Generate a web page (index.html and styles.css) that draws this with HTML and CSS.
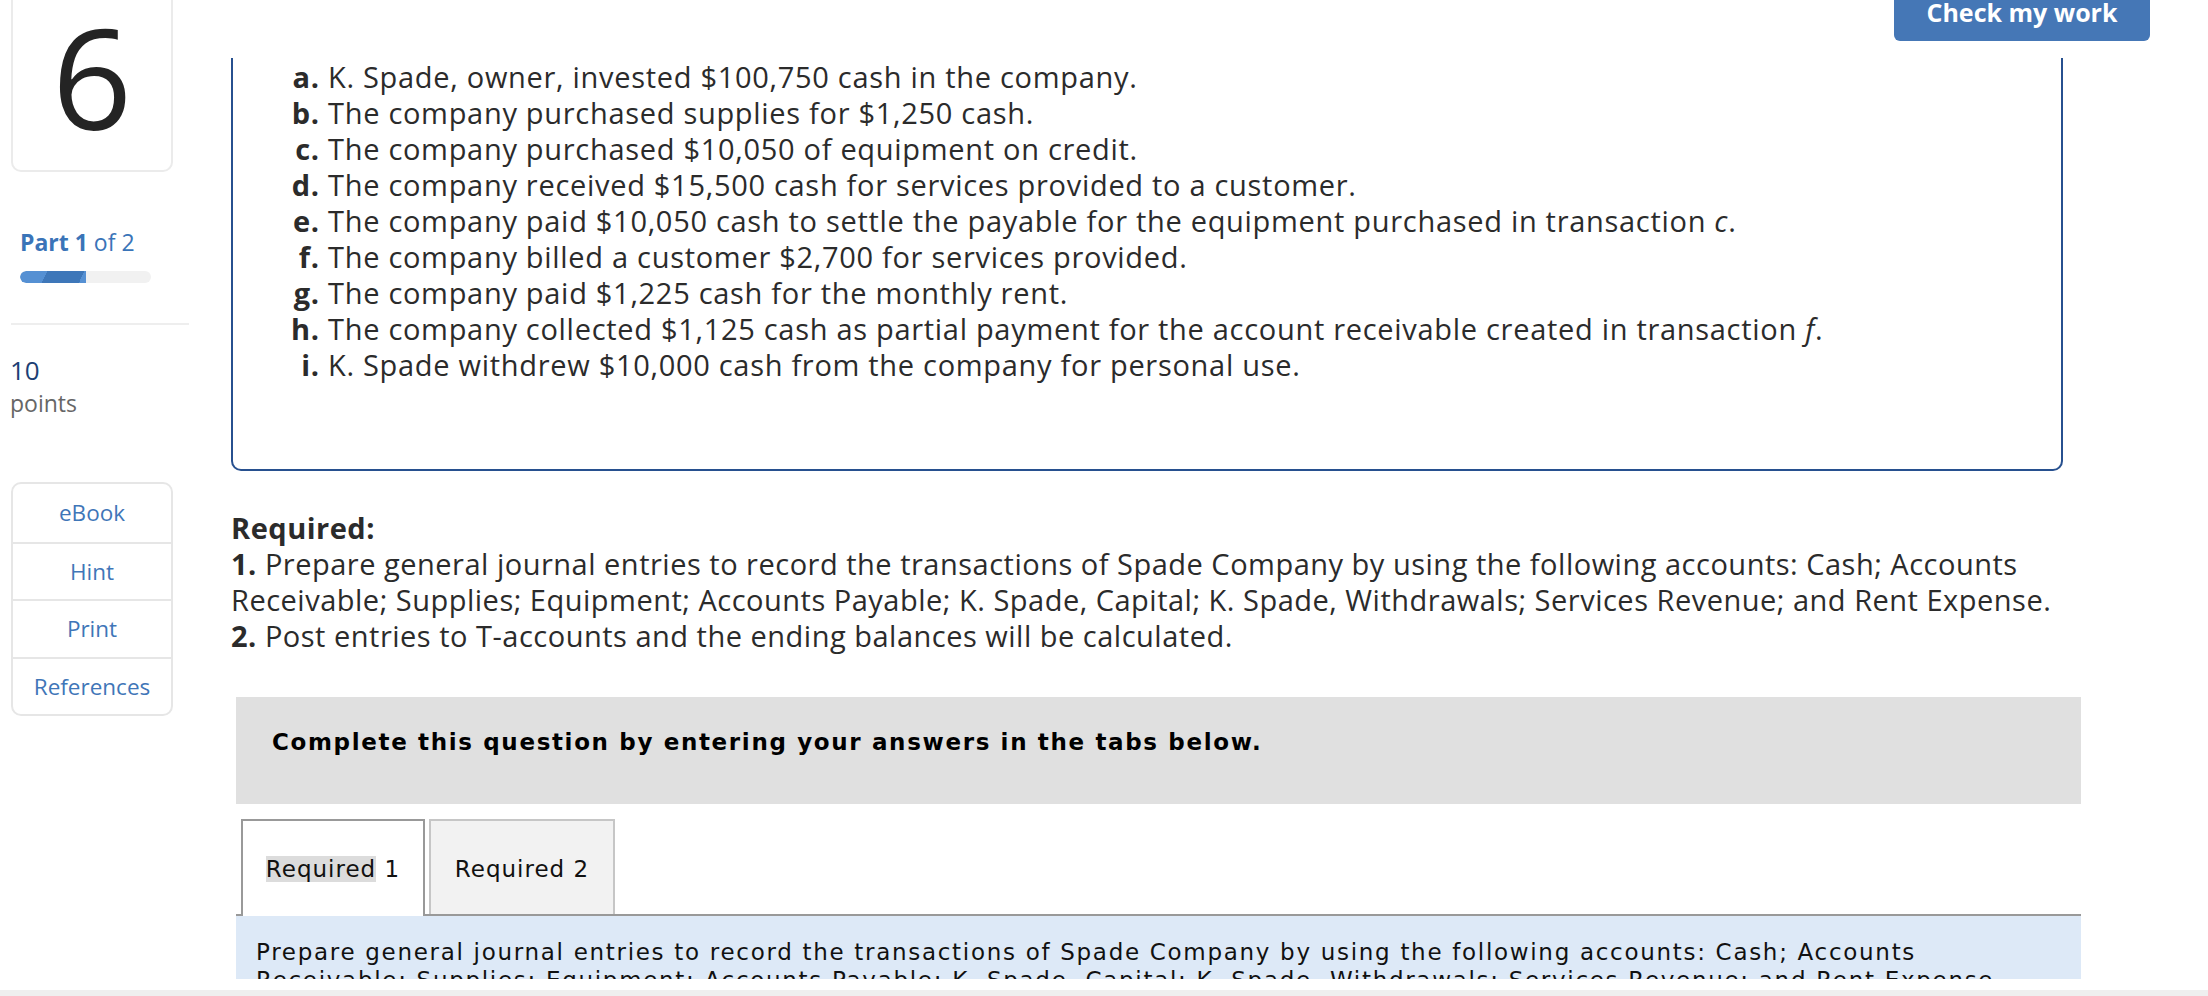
FILE: index.html
```html
<!DOCTYPE html>
<html lang="en">
<head>
<meta charset="utf-8">
<title>Question 6</title>
<link rel="stylesheet" href="styles.css">
</head>
<body>
<div class="page">
  <div class="viewport">
    <aside class="sidebar">
      <div class="qcard"><span class="qnum">6</span></div>
      <div class="part"><b>Part 1</b> of 2</div>
      <div class="progress"><div class="progress-fill"></div></div>
      <div class="divider"></div>
      <div class="pts-num">10</div>
      <div class="pts-label">points</div>
      <ul class="tools">
        <li>eBook</li>
        <li>Hint</li>
        <li>Print</li>
        <li>References</li>
      </ul>
    </aside>
    <main class="main">
      <div class="topbar"><a class="check" href="#">Check my work</a></div>
      <div class="txbox">
        <ol class="tx">
          <li>K. Spade, owner, invested $100,750 cash in the company.</li>
          <li>The company purchased supplies for $1,250 cash.</li>
          <li>The company purchased $10,050 of equipment on credit.</li>
          <li>The company received $15,500 cash for services provided to a customer.</li>
          <li>The company paid $10,050 cash to settle the payable for the equipment purchased in transaction <i>c</i>.</li>
          <li>The company billed a customer $2,700 for services provided.</li>
          <li>The company paid $1,225 cash for the monthly rent.</li>
          <li>The company collected $1,125 cash as partial payment for the account receivable created in transaction <i>f</i>.</li>
          <li>K. Spade withdrew $10,000 cash from the company for personal use.</li>
        </ol>
      </div>
      <div class="required">
        <div><b>Required:</b></div>
        <div><b>1.</b> Prepare general journal entries to record the transactions of Spade Company by using the following accounts: Cash; Accounts<br>Receivable; Supplies; Equipment; Accounts Payable; K. Spade, Capital; K. Spade, Withdrawals; Services Revenue; and Rent Expense.</div>
        <div><b>2.</b> Post entries to T-accounts and the ending balances will be calculated.</div>
      </div>
      <div class="banner">Complete this question by entering your answers in the tabs below.</div>
      <div class="tabs">
        <div class="tab tab-active"><span class="sel">Required</span> 1</div>
        <div class="tab">Required 2</div>
      </div>
      <div class="panel">Prepare general journal entries to record the transactions of Spade Company by using the following accounts: Cash; Accounts<br>Receivable; Supplies; Equipment; Accounts Payable; K. Spade, Capital; K. Spade, Withdrawals; Services Revenue; and Rent Expense.</div>
    </main>
  </div>
  <div class="bottom-strip"></div>
</div>
</body>
</html>
```

FILE: styles.css
```css
* { box-sizing: border-box; }
html, body { margin: 0; padding: 0; background: #fff; }
body { font-family: "Open Sans", "Liberation Sans", sans-serif; color: #2b2b2b; }

.page { width: 2208px; height: 996px; overflow: hidden; display: flex; flex-direction: column; }
.viewport { height: 979px; flex: none; overflow: hidden; display: flex; }
.bottom-strip { height: 17px; flex: none; border-bottom: 6px solid #efefef; }

/* Sidebar */
.sidebar { width: 231px; flex: none; padding-left: 10px; display: flex; flex-direction: column; align-items: flex-start; }
.sidebar > * { flex-shrink: 0; }
.qcard {
  position: relative; width: 162px; height: 172px; margin-left: 1px;
  border: 2px solid #ebebeb; border-top: none; border-radius: 0 0 10px 10px; background: #fff;
  display: flex; justify-content: center; padding-top: 7px;
}
.qcard::before {
  content: ""; position: absolute; left: 4px; right: -12px; top: 0; bottom: -12px;
  border: 2px solid #ededed; border-top: none; border-radius: 0 0 10px 10px; z-index: -1;
}
.qnum { font-size: 140px; line-height: 138px; color: #242424; font-weight: 400; }
.part { margin-top: 55px; margin-left: 10px; font-size: 23px; line-height: 30px; color: #3a74b8; }
.part b { font-weight: 700; }
.progress { margin-top: 14px; margin-left: 10px; width: 131px; height: 12px; border-radius: 6px; background: #f1f1f1; overflow: hidden; }
.progress-fill { width: 66px; height: 12px; border-radius: 6px 0 0 6px; background: linear-gradient(115deg, #5590d3 0 38%, #3e77b9 38% 90%, #5590d3 90%); }
.divider { margin-top: 40px; margin-left: 1px; width: 178px; height: 2px; background: #eeeeee; }
.pts-num { margin-top: 29px; font-size: 26px; line-height: 32px; color: #1d3f74; }
.pts-label { font-size: 23px; line-height: 34px; color: #666; }
.tools { list-style: none; margin: 62px 0 0 1px; padding: 0; width: 162px; border: 2px solid #e6e6e6; border-radius: 10px; }
.tools li { height: 57.5px; display: flex; align-items: center; justify-content: center; font-size: 22.5px; color: #3f76b8; }
.tools li + li { border-top: 2px solid #e6e6e6; }

/* Main */
.main { flex: 1; min-width: 0; display: flex; flex-direction: column; align-items: flex-start; }
.main > * { flex-shrink: 0; }
.topbar { width: 100%; height: 58px; display: flex; justify-content: flex-end; padding-right: 58px; }
.check {
  display: block; width: 256px; height: 41px; background: #4577b6; color: #fff; text-decoration: none;
  border-radius: 0 0 6px 6px; font-weight: 700; font-size: 25px; line-height: 24px; text-align: center;
}
.txbox { width: 1832px; border: 2px solid #27508f; border-top: none; border-radius: 0 0 10px 10px; padding: 1px 0 86px 0; }
.tx { margin: 0; padding-left: 95px; font-size: 29px; line-height: 36px; letter-spacing: 0.7px; list-style-type: lower-alpha; }
.tx li::marker { font-weight: 700; }

.required { margin-top: 39px; width: 1880px; font-size: 29px; line-height: 36px; letter-spacing: 0.5px; }
.required b { font-weight: 700; }

.banner {
  margin-top: 43px; margin-left: 5px; width: 1845px; height: 107px; background: #e0e0e0;
  padding: 31px 36px 0; font-family: "DejaVu Sans", Verdana, sans-serif; font-weight: 700;
  font-size: 23px; line-height: 28px; letter-spacing: 1.65px; color: #000;
}
.tabs {
  margin-top: 15px; margin-left: 5px; width: 1845px; height: 97px; display: flex; align-items: flex-end; gap: 4px;
  padding-left: 5px; border-bottom: 2px solid #999;
  font-family: "DejaVu Sans", Verdana, sans-serif; font-size: 23px; line-height: 28px; letter-spacing: 1px; color: #111;
}
.tab { width: 186px; height: 95px; border: 2px solid #c6c6c6; border-bottom: none; background: #f2f2f2; text-align: center; padding-top: 34px; }
.tab-active { width: 184px; height: 97px; margin-bottom: -2px; border-color: #999; background: #fff; }
.sel { background: #dcdcdc; }
.panel {
  margin-left: 5px; width: 1845px; background: #dde9f7; padding: 22px 20px;
  font-family: "DejaVu Sans", Verdana, sans-serif; font-size: 23px; line-height: 28px; letter-spacing: 1.7px; color: #111;
}
```
